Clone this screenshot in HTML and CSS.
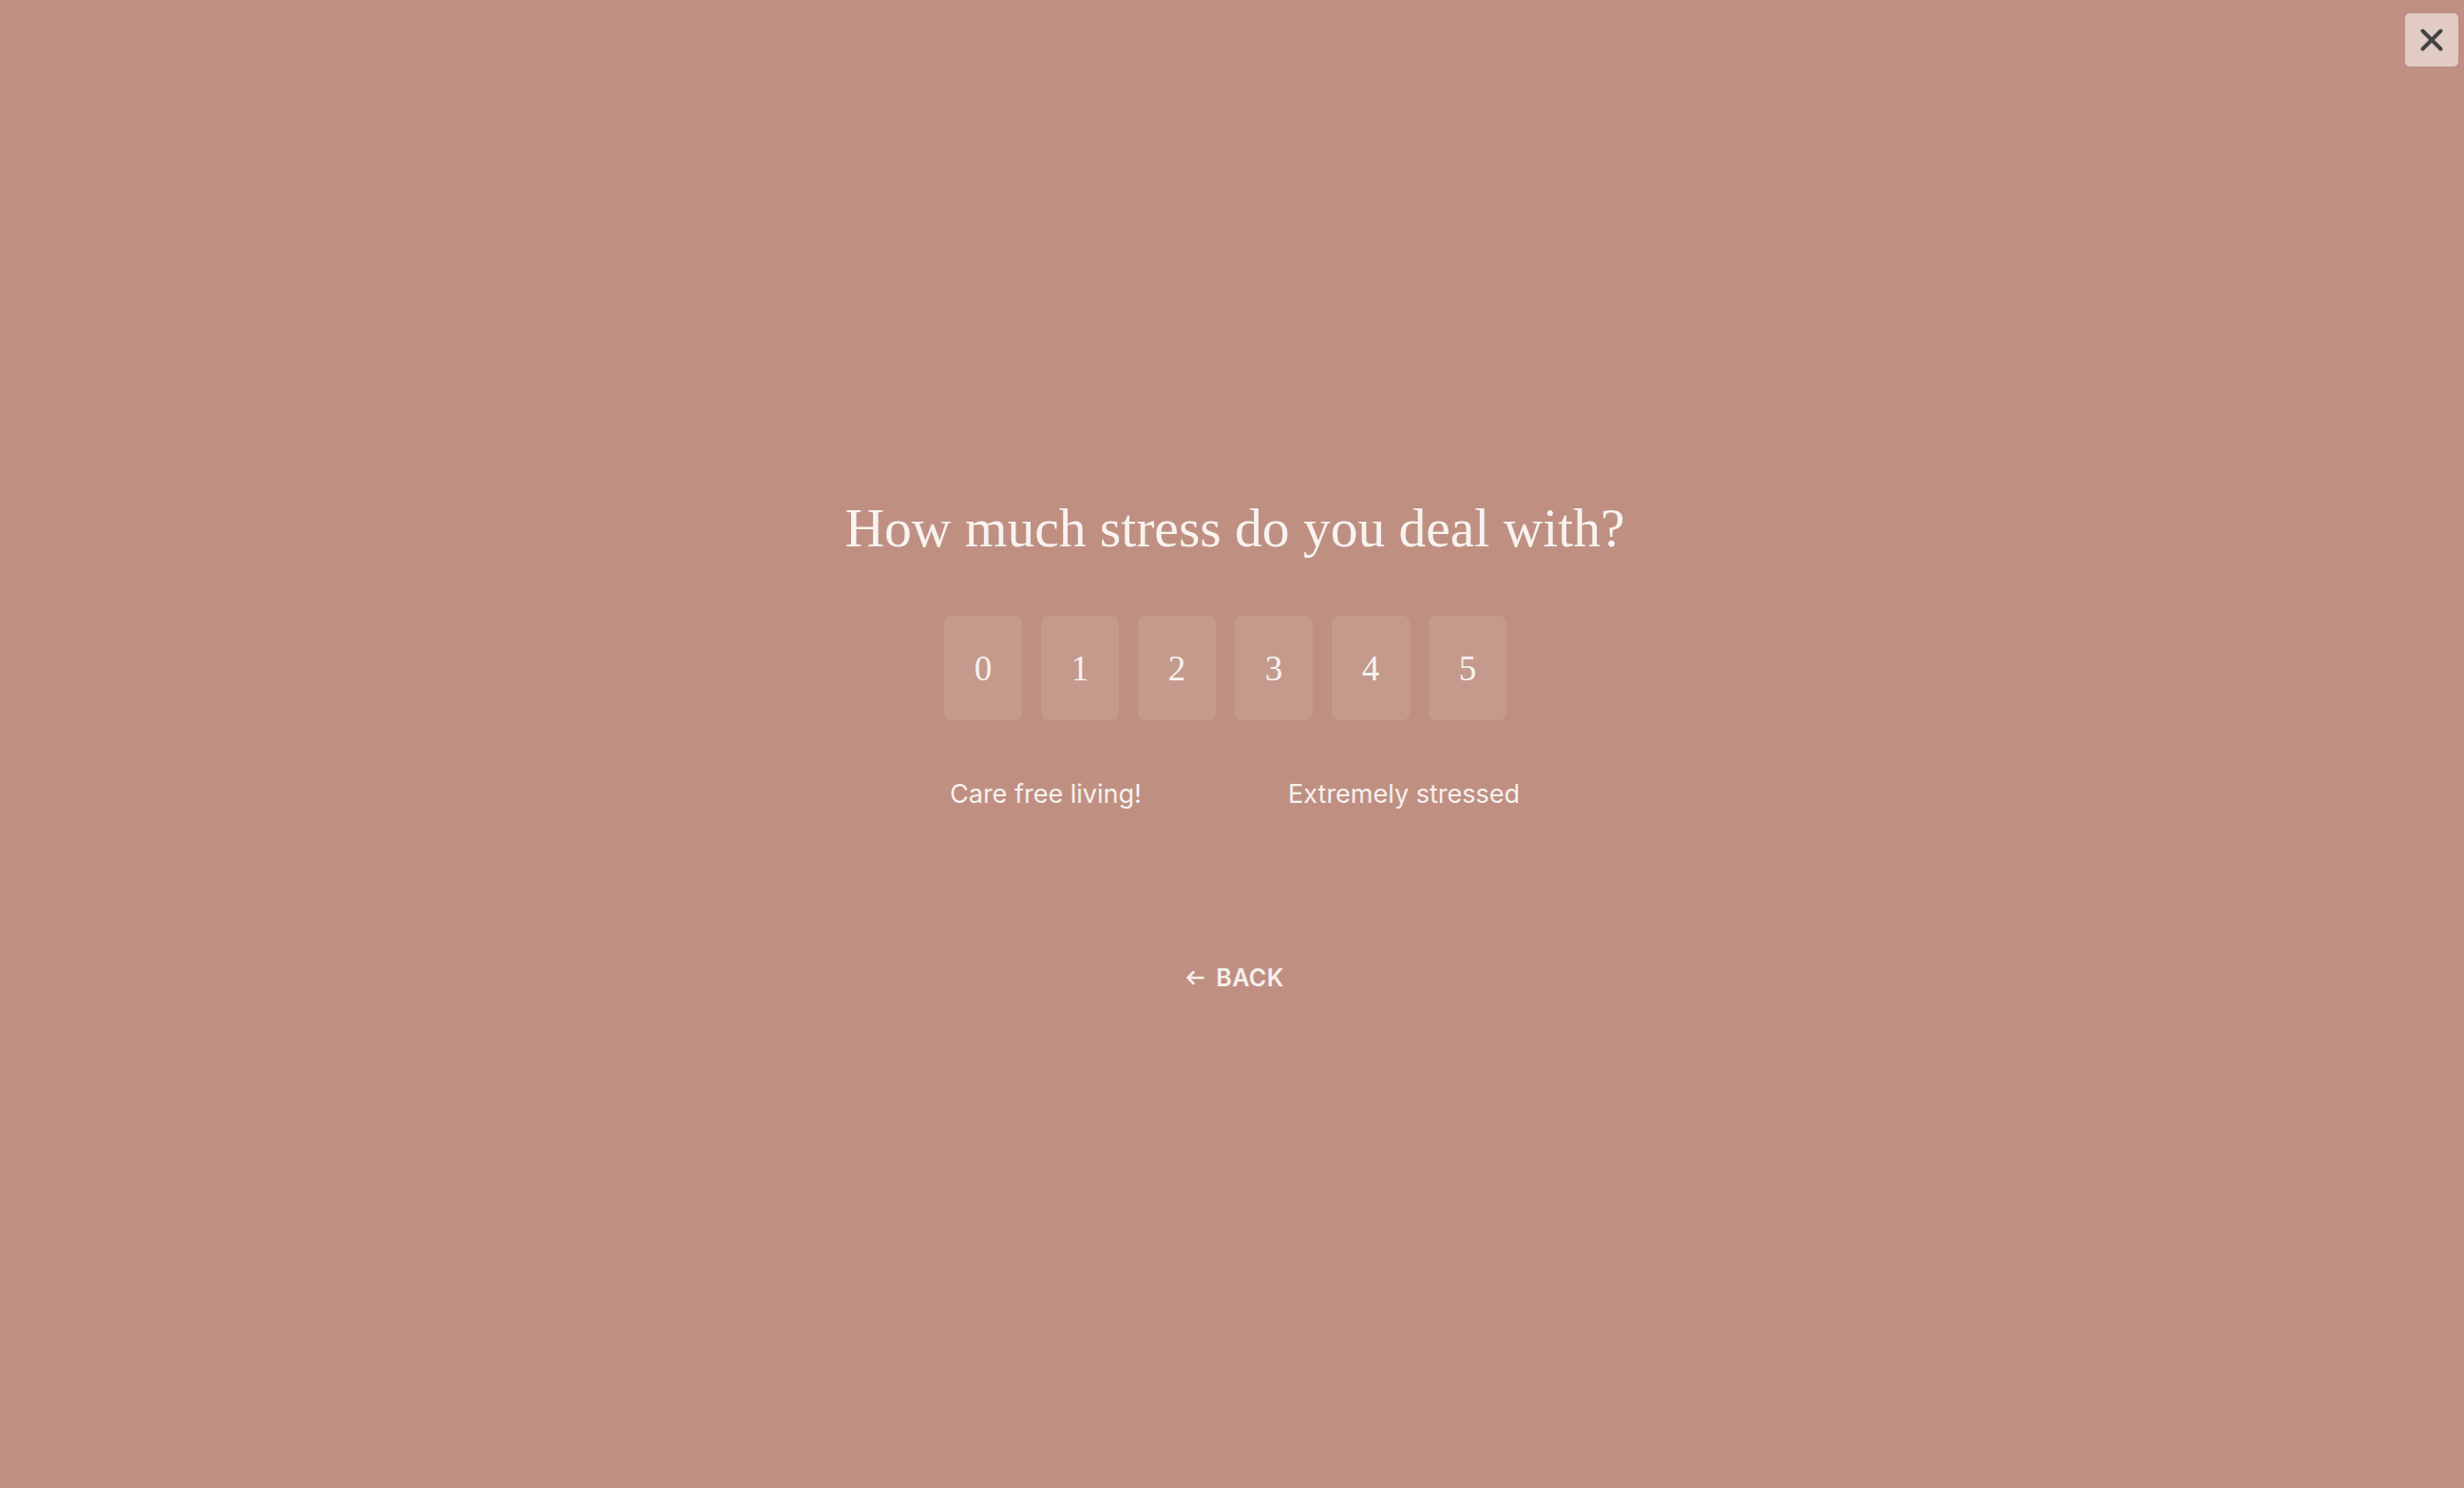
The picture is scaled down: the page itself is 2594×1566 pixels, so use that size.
FILE: index.html
```html
<!DOCTYPE html>
<html lang="en">
<head>
<meta charset="utf-8">
<title>Quiz</title>
<link rel="stylesheet" href="styles.css">
</head>
<body>
<button class="close" aria-label="Close">
  <svg width="24" height="24" viewBox="0 0 24 24"><path d="M2.5 2.5 L21.5 21.5 M21.5 2.5 L2.5 21.5" stroke="#434343" stroke-width="4" stroke-linecap="round" fill="none"/></svg>
</button>
<main class="quiz">
  <h1 class="question">How much stress do you deal with?</h1>
  <div class="scale">
    <button class="opt">0</button>
    <button class="opt">1</button>
    <button class="opt">2</button>
    <button class="opt">3</button>
    <button class="opt">4</button>
    <button class="opt">5</button>
  </div>
  <div class="labels">
    <span>Care free living!</span>
    <span>Extremely stressed</span>
  </div>
  <button class="back">
    <svg width="20" height="16" viewBox="0 0 20 16"><path d="M18.5 8 H2.5 M8.5 2 L2.5 8 L8.5 14" stroke="#f6efec" stroke-width="2.6" stroke-linecap="round" stroke-linejoin="round" fill="none"/></svg>
    <span>BACK</span>
  </button>
</main>
</body>
</html>
```

FILE: styles.css
```css
html, body {
  margin: 0;
  padding: 0;
}
body {
  background: #bf9082;
  height: 100vh;
  overflow: hidden;
  font-family: Inter, "Noto Sans", sans-serif;
  color: #f7f1ef;
}
.close {
  position: absolute;
  top: 14px;
  right: 6px;
  width: 56px;
  height: 56px;
  border: none;
  border-radius: 5px;
  background: rgba(255, 255, 255, 0.53);
  display: flex;
  align-items: center;
  justify-content: center;
  padding: 0;
  cursor: pointer;
}
.quiz {
  height: 100vh;
  box-sizing: border-box;
  padding-left: 6px;
  display: flex;
  flex-direction: column;
  align-items: center;
  justify-content: center;
}
.question {
  margin: 0;
  font-family: "Liberation Serif", "Times New Roman", serif;
  font-weight: normal;
  font-size: 57.5px;
  line-height: 68px;
  color: #f8f3f1;
}
.scale {
  margin-top: 58px;
  display: flex;
}
.opt {
  width: 82px;
  height: 110px;
  margin-right: 20px;
  border: none;
  border-radius: 8px;
  background: rgba(255, 255, 255, 0.09);
  font-family: "Liberation Serif", "Times New Roman", serif;
  font-size: 37px;
  color: #f8f3f1;
  display: flex;
  align-items: center;
  justify-content: center;
  padding: 0;
}
.labels {
  margin-top: 61px;
  width: 600px;
  display: flex;
  justify-content: space-between;
  font-size: 27px;
  line-height: 34px;
  color: #f7f1ef;
}
.back {
  margin-top: 161px;
  display: flex;
  align-items: center;
  gap: 12px;
  border: none;
  background: none;
  padding: 0;
  font-family: Inter, "Noto Sans", sans-serif;
  font-weight: 600;
  font-size: 25px;
  line-height: 30px;
  color: #f6efec;
  letter-spacing: 0.4px;
}
```
